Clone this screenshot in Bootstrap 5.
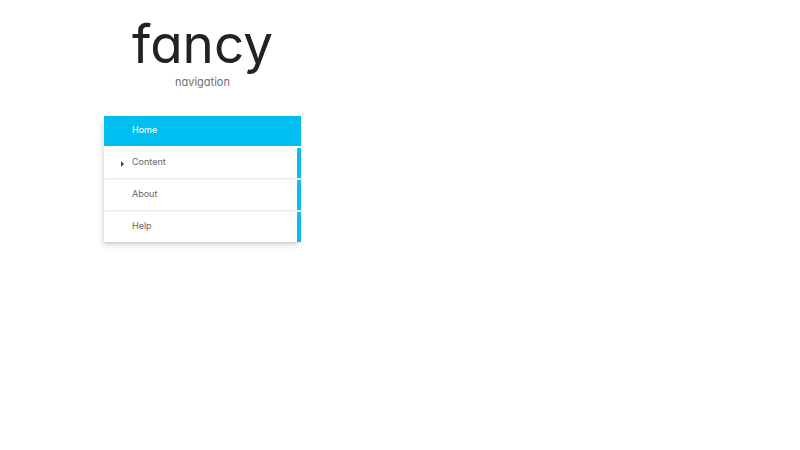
<!DOCTYPE html>
<html lang="en">
<head>
<meta charset="utf-8">
<meta name="viewport" content="width=device-width, initial-scale=1">
<title>fancy navigation</title>
<link href="https://cdn.jsdelivr.net/npm/bootstrap@5.3.0/dist/css/bootstrap.min.css" rel="stylesheet">
<style>
  body { font-family: Inter, Lato, sans-serif; font-feature-settings: "cv11"; color: #707070; background: #fff; }
  .sidebar { margin-left: 13%; width: 25%; min-width: 197px; max-width: 197px; padding-top: 12px; }
  .brand-title { font-size: 53px; line-height: 64px; font-weight: 400; color: #222; }
  .brand-sub { font-size: 11px; line-height: 12px; }
  .menu { margin-top: 28px; gap: 2px; box-shadow: -2px 4px 6px -1px rgba(0, 0, 0, .14); }
  .menu .menu-link { height: 30px; padding: 0 0 2px 28px; font-size: 9px; line-height: 16px; color: #666; background: #fff; border-right: 4px solid #0bbdec; border-radius: 0; box-shadow: -1px 2px 2px -1px rgba(0, 0, 0, .12); }
  .menu .menu-link.active { color: #fff; background: #00bff0; border-color: #00bff0; box-shadow: none; }
  .menu .has-children { padding-left: 17px; }
  .caret { width: 3px; height: 6px; margin: 3px 8px 0 0; }
</style>
</head>
<body class="min-vh-100">
<div class="sidebar">
  <header class="text-center">
    <h1 class="brand-title m-0">fancy</h1>
    <p class="brand-sub m-0">navigation</p>
  </header>
  <nav class="menu nav flex-column" aria-label="Main">
    <a class="menu-link nav-link active d-flex align-items-center" href="#home" aria-current="page">Home</a>
    <a class="menu-link nav-link has-children d-flex align-items-center" href="#content"><svg class="caret" viewBox="0 0 3 6" aria-hidden="true"><path d="M0 0L3 3L0 6Z" fill="#444"/></svg>Content</a>
    <a class="menu-link nav-link d-flex align-items-center" href="#about">About</a>
    <a class="menu-link nav-link d-flex align-items-center" href="#help">Help</a>
  </nav>
</div>
<script src="https://cdn.jsdelivr.net/npm/bootstrap@5.3.0/dist/js/bootstrap.bundle.min.js"></script>
</body>
</html>
